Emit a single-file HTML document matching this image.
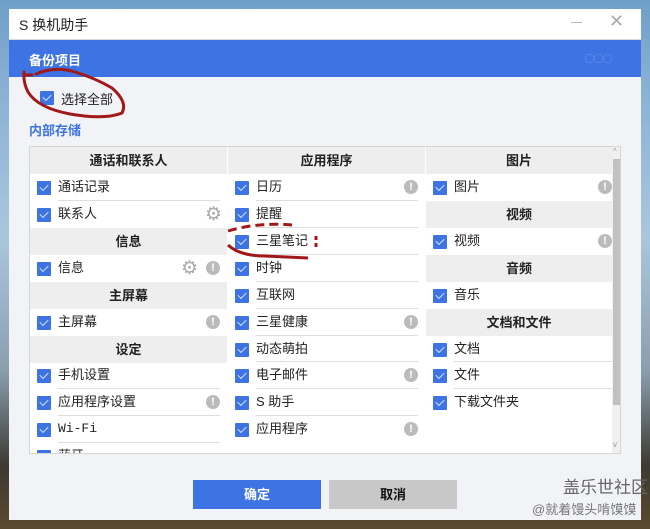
<!DOCTYPE html>
<html><head><meta charset="utf-8"><style>
*{margin:0;padding:0;box-sizing:border-box}
body{width:650px;height:529px;overflow:hidden;position:relative;font-family:"Liberation Sans","Noto Sans CJK SC",sans-serif;font-size:13px;color:#222;
background:linear-gradient(180deg,#6f9fc9 0%,#8db4d6 20%,#aac6dd 45%,#8a9fae 70%,#3d3a32 88%,#5a4a30 100%)}
.a{position:absolute}
.win{left:9px;top:9px;width:632px;height:511px;background:#f2f3f7}
.tb{left:9px;top:9px;width:632px;height:31px;background:#fff;border-bottom:1px solid #d8dbe3}
.hd{left:9px;top:40px;width:632px;height:37px;background:#3d73e3}
.tab{left:29px;top:146px;width:592px;height:308px;background:#fff;border:1px solid #d6d6d6;overflow:hidden}
.h{position:absolute;height:27px;background:#eee;font-weight:bold;text-align:center;line-height:27px;font-size:13px}
.cb{position:absolute;width:14px;height:14px;background:#3d73e3;border-radius:1px}
.cb:after{content:"";position:absolute;left:3px;top:3px;width:7px;height:4px;border-left:1.5px solid #cfe0ff;border-bottom:1.5px solid #cfe0ff;transform:rotate(-45deg)}
.t{position:absolute;line-height:27px;height:27px}
.ln{position:absolute;height:1px;background:#ddd}
.ex{position:absolute;width:14px;height:14px;border-radius:50%;background:#bbb;color:#fff;font-size:11px;font-weight:bold;text-align:center;line-height:14px}
.gear{position:absolute;width:14px;height:14px;color:#aaa;font-size:19px;line-height:14px}
</style></head><body>
<div class="a win"></div>
<div class="a tb"></div>
<div class="a" style="left:19px;top:15px;font-size:14px">S 换机助手</div>
<div class="a" style="left:571px;top:22px;width:11px;height:1px;background:#bbb"></div>
<div class="a" style="left:609px;top:11px;font-size:18px;color:#aaa">✕</div>
<div class="a hd"></div>
<div class="a" style="left:29px;top:50px;color:#fff;font-weight:bold;font-size:13px">备份项目</div>
<div class="a" style="left:585px;top:52px;color:#8fb0ee;font-size:9px;letter-spacing:0px">◯◯◯</div>
<div class="cb" style="left:40px;top:91px"></div>
<div class="a" style="left:61px;top:89px">选择全部</div>
<div class="a" style="left:29px;top:120px;color:#3d73e3;font-weight:bold">内部存储</div>

<div class="a tab">
<div class="h" style="left:0;top:0;width:197px">通话和联系人</div>
<div class="cb" style="left:7px;top:34px"></div><div class="t" style="left:28px;top:26px">通话记录</div><div class="ln" style="left:28px;top:53px;width:162px"></div>
<div class="cb" style="left:7px;top:61px"></div><div class="t" style="left:28px;top:53px">联系人</div><div class="gear" style="left:175px;top:61px">⚙</div>
<div class="h" style="left:0;top:81px;width:197px">信息</div>
<div class="cb" style="left:7px;top:115px"></div><div class="t" style="left:28px;top:107px">信息</div><div class="gear" style="left:151px;top:115px">⚙</div><div class="ex" style="left:176px;top:114px">!</div>
<div class="h" style="left:0;top:135px;width:197px">主屏幕</div>
<div class="cb" style="left:7px;top:169px"></div><div class="t" style="left:28px;top:161px">主屏幕</div><div class="ex" style="left:176px;top:168px">!</div>
<div class="h" style="left:0;top:189px;width:197px">设定</div>
<div class="cb" style="left:7px;top:222px"></div><div class="t" style="left:28px;top:214px">手机设置</div><div class="ln" style="left:28px;top:241px;width:162px"></div>
<div class="cb" style="left:7px;top:249px"></div><div class="t" style="left:28px;top:241px">应用程序设置</div><div class="ex" style="left:176px;top:248px">!</div><div class="ln" style="left:28px;top:268px;width:162px"></div>
<div class="cb" style="left:7px;top:276px"></div><div class="t" style="left:28px;top:268px;font-family:'Liberation Mono',monospace">Wi-Fi</div><div class="ln" style="left:28px;top:295px;width:162px"></div>
<div class="cb" style="left:7px;top:303px"></div><div class="t" style="left:28px;top:295px">蓝牙</div>
<div class="h" style="left:198px;top:0;width:197px">应用程序</div>
<div class="cb" style="left:205px;top:34px"></div><div class="t" style="left:226px;top:26px">日历</div><div class="ex" style="left:374px;top:33px">!</div><div class="ln" style="left:226px;top:53px;width:162px"></div>
<div class="cb" style="left:205px;top:61px"></div><div class="t" style="left:226px;top:53px">提醒</div><div class="ln" style="left:226px;top:80px;width:162px"></div>
<div class="cb" style="left:205px;top:88px"></div><div class="t" style="left:226px;top:80px">三星笔记</div><div class="ln" style="left:226px;top:107px;width:162px"></div>
<div class="cb" style="left:205px;top:115px"></div><div class="t" style="left:226px;top:107px">时钟</div><div class="ln" style="left:226px;top:134px;width:162px"></div>
<div class="cb" style="left:205px;top:142px"></div><div class="t" style="left:226px;top:134px">互联网</div><div class="ln" style="left:226px;top:161px;width:162px"></div>
<div class="cb" style="left:205px;top:169px"></div><div class="t" style="left:226px;top:161px">三星健康</div><div class="ex" style="left:374px;top:168px">!</div><div class="ln" style="left:226px;top:188px;width:162px"></div>
<div class="cb" style="left:205px;top:196px"></div><div class="t" style="left:226px;top:188px">动态萌拍</div><div class="ln" style="left:226px;top:214px;width:162px"></div>
<div class="cb" style="left:205px;top:222px"></div><div class="t" style="left:226px;top:214px">电子邮件</div><div class="ex" style="left:374px;top:221px">!</div><div class="ln" style="left:226px;top:241px;width:162px"></div>
<div class="cb" style="left:205px;top:249px"></div><div class="t" style="left:226px;top:241px">S 助手</div><div class="ln" style="left:226px;top:268px;width:162px"></div>
<div class="cb" style="left:205px;top:276px"></div><div class="t" style="left:226px;top:268px">应用程序</div><div class="ex" style="left:374px;top:275px">!</div>
<div class="h" style="left:396px;top:0;width:186px">图片</div>
<div class="cb" style="left:403px;top:34px"></div><div class="t" style="left:424px;top:26px">图片</div><div class="ex" style="left:568px;top:33px">!</div>
<div class="h" style="left:396px;top:54px;width:186px">视频</div>
<div class="cb" style="left:403px;top:88px"></div><div class="t" style="left:424px;top:80px">视频</div><div class="ex" style="left:568px;top:87px">!</div>
<div class="h" style="left:396px;top:108px;width:186px">音频</div>
<div class="cb" style="left:403px;top:142px"></div><div class="t" style="left:424px;top:134px">音乐</div>
<div class="h" style="left:396px;top:162px;width:186px">文档和文件</div>
<div class="cb" style="left:403px;top:196px"></div><div class="t" style="left:424px;top:188px">文档</div><div class="ln" style="left:424px;top:214px;width:158px"></div>
<div class="cb" style="left:403px;top:222px"></div><div class="t" style="left:424px;top:214px">文件</div><div class="ln" style="left:424px;top:241px;width:158px"></div>
<div class="cb" style="left:403px;top:249px"></div><div class="t" style="left:424px;top:241px">下载文件夹</div>
<div class="a" style="left:582px;top:0;width:9px;height:306px;background:#f0f0f0"></div>
<div class="a" style="left:583px;top:12px;width:7px;height:246px;background:#c1c1c1"></div>
<div class="a" style="left:583px;top:0;font-size:8px;color:#999">^</div>
<div class="a" style="left:583px;top:293px;font-size:8px;color:#999">v</div>
</div>

<div class="a" style="left:193px;top:480px;width:128px;height:29px;background:#3d73e3;color:#fff;font-weight:bold;text-align:center;line-height:29px">确定</div>
<div class="a" style="left:329px;top:480px;width:128px;height:29px;background:#c8c8c8;color:#111;font-weight:bold;text-align:center;line-height:29px">取消</div>
<div class="a" style="left:563px;top:473px;font-size:17px;color:#666">盖乐世社区</div>
<div class="a" style="left:532px;top:499px;font-size:13px;color:#777">@就着馒头啃馍馍</div>

<svg class="a" style="left:0;top:0" width="650" height="529">
<path d="M25 75 L32 75 M36 74 Q55 66 75 72 Q95 78 112 88 Q128 102 122 113 Q105 120 70 114 Q38 108 28 92 Q23 82 24 72" fill="none" stroke="#a01818" stroke-width="3" stroke-linecap="round"/>
<path d="M228 231 Q258 222 292 225" fill="none" stroke="#a01818" stroke-width="3" stroke-dasharray="9 5"/>
<path d="M228 245 Q240 256 265 256 L308 258" fill="none" stroke="#a01818" stroke-width="3"/>
<path d="M316 236 L316 247" fill="none" stroke="#a01818" stroke-width="3" stroke-dasharray="4 3"/>
</svg>
</body></html>
